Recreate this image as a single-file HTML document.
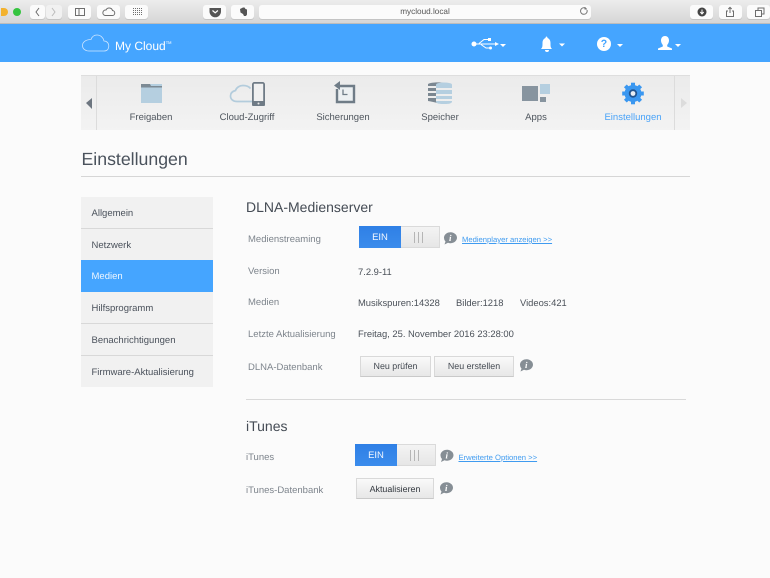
<!DOCTYPE html>
<html><head><meta charset="utf-8">
<style>
*{box-sizing:border-box}
html,body{margin:0;padding:0;width:770px;height:578px;overflow:hidden;background:#fbfbfb}
body{font-family:"Liberation Sans",sans-serif;position:relative;color:#4d5560;text-rendering:geometricPrecision}
#w{position:absolute;left:0;top:0;width:770px;height:578px;filter:blur(.3px)}
.a{position:absolute;white-space:nowrap}
.tb{position:absolute;top:5px;height:14px;background:#fbfbfb;border-radius:3px;box-shadow:0 1px 0 #c4c4c4}
.nl{position:absolute;font-size:9.5px;line-height:14px;text-align:center;color:#4f565e;width:100px}
.sb{position:absolute;left:81px;width:132px;height:32px;background:#f1f1f1;border-bottom:1px solid #d8d8d8;font-size:9.5px;line-height:34px;padding-left:10.5px;color:#4a515b}
.lb{position:absolute;font-size:9.5px;line-height:14px;color:#7d848c;white-space:nowrap}
.v{position:absolute;font-size:9.4px;line-height:14px;color:#4c525a;white-space:nowrap}
.h{position:absolute;font-size:14px;line-height:18px;color:#454c55;white-space:nowrap}
.btn{position:absolute;height:21px;background:linear-gradient(#f9f9f9,#e7e7e7);border:1px solid #d9d9d9;border-bottom-color:#c9c9c9;font-size:8.9px;line-height:19px;text-align:center;color:#444a52}
.tg{position:absolute;width:81px;height:22px;background:linear-gradient(#f3f3f3,#e6e6e6);border:1px solid #dadada}
.tg b{position:absolute;left:-1px;top:-1px;width:42px;height:22px;background:linear-gradient(#2f80e6,#3b8cec);color:#f2f7ff;font-weight:normal;font-size:9.5px;line-height:24px;text-align:center}
.tg i{position:absolute;top:5px;width:1px;height:11px;background:#b5b5b5}
.lk{position:absolute;font-size:7.65px;line-height:12px;color:#3f9bf0;text-decoration:underline;white-space:nowrap}
</style></head><body><div id="w">
<!-- browser chrome -->
<div class="a" style="left:0;top:0;width:770px;height:24px;background:linear-gradient(#ececec,#d5d5d5);border-bottom:1px solid #bcbcbc"></div>
<div class="a" style="left:1px;top:7.5px;width:7px;height:8px;background:#f3b22e;border-radius:0 5px 5px 0"></div>
<div class="a" style="left:13px;top:7.5px;width:8px;height:8px;background:#35c43f;border-radius:50%"></div>
<div class="tb" style="left:30px;width:15px"></div><div class="tb" style="left:46px;width:16px;background:#f1f1f1"></div>
<div class="tb" style="left:68px;width:23px"></div><div class="tb" style="left:97px;width:23px"></div><div class="tb" style="left:125px;width:23px"></div>
<div class="tb" style="left:203px;width:23px"></div><div class="tb" style="left:231px;width:23px"></div>
<div class="tb" style="left:259px;width:332px"></div>
<div class="tb" style="left:690px;width:23px"></div><div class="tb" style="left:719px;width:23px"></div><div class="tb" style="left:747px;width:23px"></div>
<svg class="a" style="left:0;top:0" width="770" height="24" fill="none" stroke="#6d6d6d" stroke-width="1">
<path d="M39 8l-3 4 3 4"/><path d="M52 8l3 4-3 4" stroke="#bbb"/>
<rect x="75.500" y="8.500" width="9" height="7"/><path d="M79 8.500v7"/>
<path d="M105 15.500h7a2.500 2.500 0 0 0 .5-5 3.500 3.500 0 0 0-6.500-.5 2.800 2.800 0 0 0-1 5.500z"/>
<path d="M133 8.500h9M133 10.500h9M133 12.500h9M133 14.500h9" stroke-dasharray="1 1"/>
<path d="M210 8.500h10.500v3a5.200 5.200 0 0 1-10.500 0z" fill="#555" stroke="#555"/><path d="M212.500 10.500l2.700 2.300 2.700-2.300" stroke="#fff" stroke-width="1.200"/>
<path d="M240 9l3-1.500h1.500l1 1.500 1.500 .5v5l-1 1.500h-2l-1-2-2.500-1.500z" fill="#555" stroke="none"/>
<path d="M587 10a3.300 3.300 0 1 1-1-1.500" stroke="#777"/><path d="M585 7v2h2" stroke="#777"/>
<circle cx="702" cy="12" r="4.500" fill="#444" stroke="none"/><path d="M702 9.500v4M700.300 12l1.700 2 1.700-2" stroke="#fff"/>
<path d="M728 11h-1.500v5.500h7V11H732M730 13V7.500M728.300 9l1.700-1.700 1.700 1.700"/>
<rect x="755.500" y="10.500" width="6" height="6"/><path d="M758 10.500v-2.500h6v6h-2.500"/>
</svg>
<div class="a" style="left:259px;top:5px;width:332px;text-align:center;font-size:8.200px;line-height:14px;color:#555">mycloud.local</div>
<!-- blue header -->
<div class="a" style="left:0;top:24px;width:770px;height:38px;background:#45a5ff"></div>
<svg class="a" style="left:81px;top:32px" width="30" height="22" fill="none" stroke="#cfe6ff" stroke-width=".8"><path d="M8 19h15c3.500 0 4.800-2.500 4.800-5s-1.600-5-4.800-5c-.8-3.500-3.500-6-7-6-3 0-5 1.700-6 4.500C5 7.500 1.500 10 1.500 13.500 1.500 17 4.500 19 8 19z"/></svg>
<div class="a" style="left:115px;top:35px;font-size:12px;line-height:16px;color:#fff">My Cloud<span style="font-size:4px;vertical-align:6px">TM</span></div>
<svg class="a" style="left:465px;top:30px" width="225" height="26" fill="#fff" stroke="none">
<circle cx="9" cy="14" r="2.500"/><path d="M9 13.500h22v1H9z"/><path d="M30 12l4 2-4 2z"/>
<path d="M14 13.500l5-4h4" fill="none" stroke="#fff"/><rect x="23" y="8" width="3" height="3"/>
<path d="M16 14.500l5 3.500h3" fill="none" stroke="#fff"/><circle cx="25.500" cy="18" r="1.500"/>
<path d="M35 14h6l-3 3z"/>
<path d="M76 19c1.500-1.500 1.500-3 1.500-6 0-3 1.500-4.500 3-5 0-1 .5-1.500 1-1.500s1 .5 1 1.500c1.500 .5 3 2 3 5 0 3 0 4.500 1.500 6z"/><path d="M80 20h4a2 2 0 0 1-4 0z"/>
<path d="M94 13.500h6l-3 3z"/>
<circle cx="139" cy="14" r="7"/>
<path d="M152 14h6l-3 3z"/>
<path d="M200 6c2.800 0 4 2.200 4 4.500 0 2-1 3.500-1.800 4.500v1.500l4.800 2v1.500h-14v-1.500l4.800-2V15c-.8-1-1.800-2.500-1.800-4.500C196 8.200 197.200 6 200 6z"/>
<path d="M210 14h6l-3 3z"/>
</svg>
<div class="a" style="left:600px;top:37.500px;width:8px;text-align:center;font-size:10.500px;font-weight:bold;line-height:13px;color:#45a5ff">?</div>
<!-- nav bar -->
<div class="a" style="left:81px;top:75px;width:609px;height:55px;background:linear-gradient(#ebebeb,#f3f3f3);border-top:1px solid #dedede"></div>
<div class="a" style="left:96px;top:76px;width:1px;height:54px;background:#dcdcdc"></div>
<div class="a" style="left:674px;top:76px;width:1px;height:54px;background:#dcdcdc"></div>
<svg class="a" style="left:81px;top:75px" width="609" height="55" stroke="none">
<path d="M5 28l6-5v11z" fill="#6d7680"/>
<path d="M600 23l6 5-6 5z" fill="#dcdcdc"/>
<!-- Freigaben -->
<path d="M60 9h21v19H60z" fill="#b5cfe0"/><path d="M60 9h9l1 2h11v1.500H60z" fill="#7c8a94"/>
<!-- Cloud -->
<path d="M171 26.500H156c-3.500 0-6.500-2-6.500-5.500s3-5 5-5.500c1-3 4-5 7.500-5 3 0 6 1 7.500 3" fill="none" stroke="#b3ccdc" stroke-width="1.700"/>
<rect x="171.900" y="7.900" width="11.200" height="22.200" rx="1.500" fill="#f0f0f0" stroke="#6f7b86" stroke-width="1.800"/><rect x="171" y="26" width="13" height="5" rx="1" fill="#6f7b86"/><circle cx="177.500" cy="28.500" r="1" fill="#e8e8e8"/>
<!-- Sicherungen -->
<path d="M259 11h14v16h-17v-13" fill="#ecf0f2" stroke="#6f7c87" stroke-width="2.400"/><path d="M253 10.500l6-4.500v9z" fill="#6f7c87"/><path d="M262 14.500v5h4.500" fill="none" stroke="#6f7c87" stroke-width="1.300"/>
<!-- Speicher -->
<g transform="translate(0 -1)"><path d="M347 10c3-2 13-2 16-1v3h-16zM347 14h8v3h-8zM347 19h8v3h-8zM347 24h8v3l8 2v1c-3 0-10-2-16-3z" fill="#7b8791"/>
<path d="M355 11h16v3h-16zM355 16h16v4h-16zM355 22h16v3h-16zM355 27h16c0 2-1 3-8 3s-8-1-8-3z" fill="#b5cfe0"/><ellipse cx="363" cy="10.500" rx="8" ry="2" fill="#b5cfe0"/></g>
<!-- Apps -->
<rect x="441" y="11" width="16" height="15" fill="#87949f"/><rect x="459" y="9" width="10" height="10" fill="#b5cfe0"/><rect x="459" y="22" width="6" height="5" fill="#87949f"/>
<!-- gear -->
<g transform="translate(552 18.500)"><circle r="8.500" fill="#3a97f0"/>
<g fill="#3a97f0"><rect x="-2" y="-10.800" width="4" height="21.600"/><rect x="-2" y="-10.800" width="4" height="21.600" transform="rotate(45)"/><rect x="-2" y="-10.800" width="4" height="21.600" transform="rotate(90)"/><rect x="-2" y="-10.800" width="4" height="21.600" transform="rotate(135)"/></g>
<circle r="4.200" fill="#21548f"/><circle r="2.400" fill="#e8eef4"/></g>
</svg>
<div class="nl" style="left:101px;top:111px">Freigaben</div>
<div class="nl" style="left:197px;top:111px">Cloud-Zugriff</div>
<div class="nl" style="left:293px;top:111px">Sicherungen</div>
<div class="nl" style="left:390px;top:111px">Speicher</div>
<div class="nl" style="left:486px;top:111px">Apps</div>
<div class="nl" style="left:583px;top:111px;color:#4aa3f8">Einstellungen</div>
<!-- title -->
<div class="a" style="left:81.500px;top:148px;font-size:17.700px;line-height:22px;color:#4a525c">Einstellungen</div>
<div class="a" style="left:81px;top:176px;width:609px;height:1px;background:#d6d6d6"></div>
<!-- sidebar -->
<div class="sb" style="top:197px">Allgemein</div>
<div class="sb" style="top:229px;height:31px;border:0">Netzwerk</div>
<div class="sb" style="top:260px;background:#45a5ff;color:#eef6ff;border-bottom:0">Medien</div>
<div class="sb" style="top:292px">Hilfsprogramm</div>
<div class="sb" style="top:324px">Benachrichtigungen</div>
<div class="sb" style="top:356px;border-bottom:0;height:31px">Firmware-Aktualisierung</div>
<!-- DLNA -->
<div class="h" style="left:246px;top:198px">DLNA-Medienserver</div>
<div class="lb" style="left:248px;top:233px">Medienstreaming</div>
<div class="tg" style="left:359px;top:226px"><b>EIN</b><i style="left:54px"></i><i style="left:58px"></i><i style="left:62px"></i></div>
<div class="lk" style="left:462px;top:234px">Medienplayer anzeigen &gt;&gt;</div>
<div class="lb" style="left:248px;top:265px">Version</div>
<div class="v" style="left:358px;top:265px">7.2.9-11</div>
<div class="lb" style="left:248px;top:296px">Medien</div>
<div class="v" style="left:358px;top:296px">Musikspuren:14328</div>
<div class="v" style="left:456px;top:296px">Bilder:1218</div>
<div class="v" style="left:520px;top:296px">Videos:421</div>
<div class="lb" style="left:248px;top:328px">Letzte Aktualisierung</div>
<div class="v" style="left:358px;top:327px">Freitag, 25. November 2016 23:28:00</div>
<div class="lb" style="left:248px;top:361px">DLNA-Datenbank</div>
<div class="btn" style="left:360px;top:356px;width:71px">Neu prüfen</div>
<div class="btn" style="left:434px;top:356px;width:80px">Neu erstellen</div>
<div class="a" style="left:246px;top:399px;width:440px;height:1px;background:#d9d9d9"></div>
<!-- iTunes -->
<div class="h" style="left:246px;top:417px">iTunes</div>
<div class="lb" style="left:246px;top:451px">iTunes</div>
<div class="tg" style="left:355px;top:444px"><b>EIN</b><i style="left:54px"></i><i style="left:58px"></i><i style="left:62px"></i></div>
<div class="lk" style="left:458.500px;top:452px">Erweiterte Optionen &gt;&gt;</div>
<div class="lb" style="left:246px;top:484px">iTunes-Datenbank</div>
<div class="btn" style="left:356px;top:478px;width:78px;color:#33383f;line-height:20px">Aktualisieren</div>
<!-- info icons -->
<svg class="a" style="left:0;top:0" width="770" height="578">
<g fill="#868e95">
<path d="M444 238a6.500 5.500 0 1 1 4 4.800l-3.500 1.700 1-3a5 5 0 0 1-1.500-3.500z"/>
<path d="M520 365a6.500 5.500 0 1 1 4 4.800l-3.500 1.700 1-3a5 5 0 0 1-1.500-3.500z"/>
<path d="M440.500 455.500a6.500 5.500 0 1 1 4 4.800l-3.500 1.700 1-3a5 5 0 0 1-1.500-3.500z"/>
<path d="M440 488a6.500 5.500 0 1 1 4 4.800l-3.500 1.700 1-3a5 5 0 0 1-1.500-3.500z"/>
</g>
<g fill="#fff" font-family="Liberation Serif" font-style="italic" font-weight="bold" font-size="9">
<text x="449" y="241">i</text><text x="525" y="368">i</text><text x="445.500" y="458.500">i</text><text x="445" y="491">i</text>
</g>
</svg>
</div></body></html>
